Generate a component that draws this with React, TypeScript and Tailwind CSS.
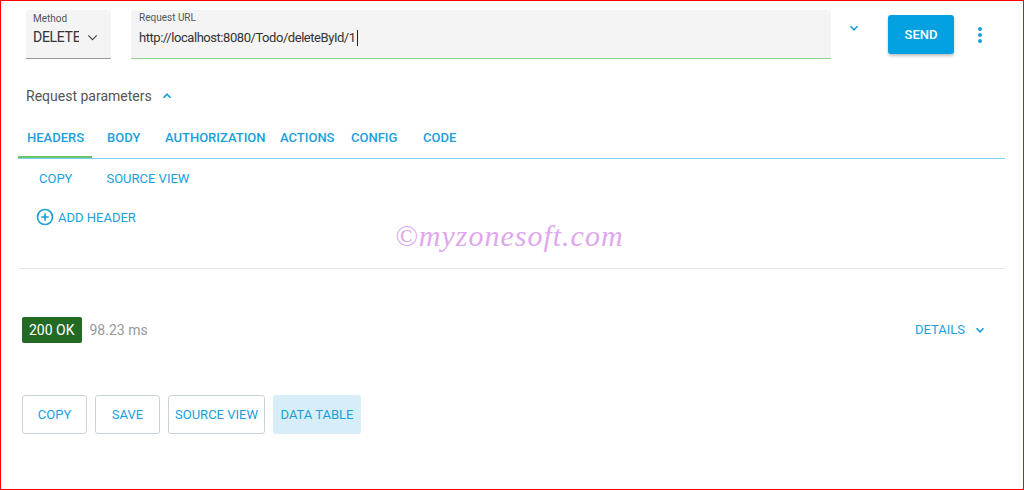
import React from 'react'

const blue = 'text-[#1a9fdc]'

function Chevron({ up = false, className = '', sw = 3 }: { up?: boolean; className?: string; sw?: number }) {
  return (
    <svg viewBox="0 0 24 24" className={className} fill="none" stroke="currentColor" strokeWidth={sw}>
      <path d={up ? 'M6 15l6-6 6 6' : 'M6 9l6 6 6-6'} />
    </svg>
  )
}

const tabs = [
  { label: 'HEADERS', cls: 'w-[74px] pl-[9px] border-b-2 border-[#6cc36a]' },
  { label: 'BODY', cls: 'w-[73px] pl-[15px]' },
  { label: 'AUTHORIZATION', cls: 'w-[115px]' },
  { label: 'ACTIONS', cls: 'w-[71px]' },
  { label: 'CONFIG', cls: 'w-[72px]' },
  { label: 'CODE', cls: 'w-[60px]' },
]

export default function App() {
  return (
    <div
      className="w-[1024px] h-[490px] bg-white border border-[#ff0000] overflow-hidden"
      style={{ fontFamily: 'Roboto, "Liberation Sans", sans-serif' }}
    >
      {/* top request bar */}
      <div className="flex items-start pl-[25px] pt-[9px] h-[60px]">
        <div className="w-[85px] h-[49px] bg-[#f4f4f4] border-b border-[#999] rounded-t-[3px]">
          <div className="text-[10px] text-[#555] pl-[7px] pt-[3px] leading-[12px]">Method</div>
          <div className="flex items-center pl-[7px] mt-[3px]">
            <span className="text-[14px] tracking-[-0.3px] text-[#333] w-[46px] overflow-hidden whitespace-nowrap leading-[18px]">DELETE</span>
            <Chevron sw={1.6} className="w-[17px] h-[17px] ml-[5px] text-[#444]" />
          </div>
        </div>
        <div className="ml-[20px] w-[700px] h-[49px] bg-[#f4f4f4] border-b border-[#8fd08a] rounded-t-[3px]">
          <div className="text-[10px] text-[#555] pl-[8px] pt-[2px] leading-[12px]">Request URL</div>
          <div className="text-[13px] tracking-[-0.45px] text-[#333] pl-[8px] mt-[5px] leading-[18px]">
            http://localhost:8080/Todo/deleteById/1<span className="inline-block w-px h-[16px] bg-[#222] align-middle -mt-[2px] ml-[1px]" />
          </div>
        </div>
        <Chevron className={`w-[14px] h-[14px] ml-[16px] mt-[11px] ${blue}`} />
        <button className="ml-[27px] mt-[5px] w-[66px] h-[39px] bg-[#04a1e0] rounded-[3px] text-white text-[13px] font-medium shadow-[0_2px_3px_rgba(0,0,0,0.25)]">
          SEND
        </button>
        <div className="ml-[24px] mt-[17px] flex flex-col gap-[2px]">
          <span className="w-[4px] h-[4px] rounded-full bg-[#1a9fdc]" />
          <span className="w-[4px] h-[4px] rounded-full bg-[#1a9fdc]" />
          <span className="w-[4px] h-[4px] rounded-full bg-[#1a9fdc]" />
        </div>
      </div>

      {/* request parameters */}
      <div className="flex items-center pl-[25px] mt-[25px] h-[20px]">
        <span className="text-[14px] text-[#555]">Request parameters</span>
        <Chevron up className={`w-[14px] h-[14px] ml-[8px] ${blue}`} />
      </div>

      {/* tabs */}
      <div className="ml-[17px] mr-[18px] mt-[21px] border-b border-[#7ed0ee] flex">
        {tabs.map(t => (
          <div
            key={t.label}
            className={`${t.cls} h-[31px] pt-[1px] leading-[20px] text-[13px] font-medium whitespace-nowrap ${blue}`}
          >
            {t.label}
          </div>
        ))}
      </div>

      <div className={`flex pl-[38px] mt-[10px] text-[13px] ${blue}`}>
        <span>COPY</span>
        <span className="ml-[34px]">SOURCE VIEW</span>
      </div>

      <div className={`flex items-center pl-[35px] mt-[19px] text-[13px] ${blue}`}>
        <svg viewBox="0 0 24 24" className="w-[18px] h-[18px]" fill="none" stroke="currentColor" strokeWidth={2.2}>
          <circle cx="12" cy="12" r="10" />
          <path d="M12 7v10M7 12h10" />
        </svg>
        <span className="ml-[4px]">ADD HEADER</span>
      </div>

      <div className="relative ml-[17px] mr-[18px] mt-[41px] border-b border-[#e6e6e6]">
        <span
          className="absolute left-[377px] -top-[50px] text-[30px] italic text-[#dfa7ee] tracking-[1px] whitespace-nowrap leading-[36px]"
          style={{ fontFamily: '"Liberation Serif", serif' }}
        >
          ©myzonesoft.com
        </span>
      </div>

      {/* response status */}
      <div className="flex items-center pl-[21px] pr-[36px] mt-[48px]">
        <span className="h-[26px] px-[7px] bg-[#236b25] rounded-[2px] text-white text-[14px] leading-[26px]">200 OK</span>
        <span className="ml-[8px] text-[14px] text-[#999]">98.23 ms</span>
        <span className={`ml-auto text-[13px] ${blue}`}>DETAILS</span>
        <Chevron className={`w-[14px] h-[14px] ml-[8px] ${blue}`} />
      </div>

      <div className={`flex pl-[21px] mt-[52px] gap-[8px] text-[13px] ${blue}`}>
        <button className="w-[65px] h-[39px] border border-[#c9d3d8] rounded-[3px]">COPY</button>
        <button className="w-[65px] h-[39px] border border-[#c9d3d8] rounded-[3px]">SAVE</button>
        <button className="w-[97px] h-[39px] border border-[#c9d3d8] rounded-[3px]">SOURCE VIEW</button>
        <button className="w-[88px] h-[39px] bg-[#d7eef8] rounded-[3px]">DATA TABLE</button>
      </div>
    </div>
  )
}
